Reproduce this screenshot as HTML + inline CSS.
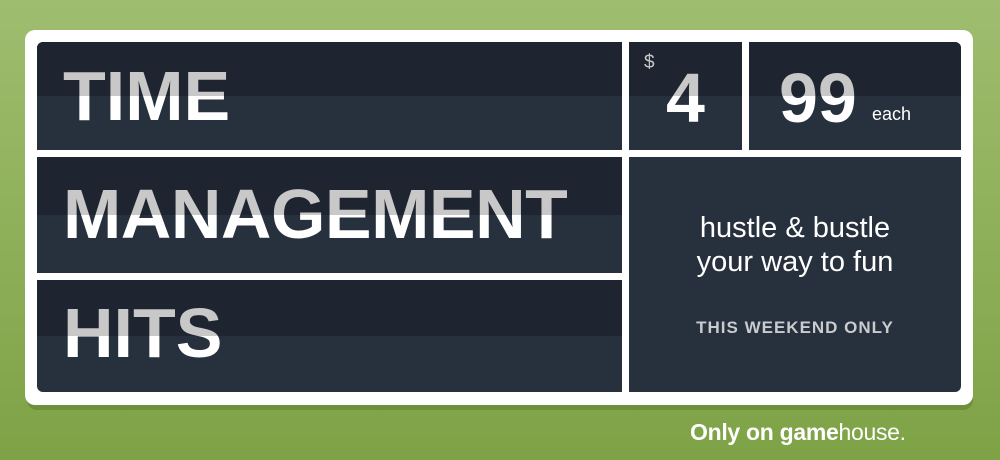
<!DOCTYPE html>
<html><head><style>
*{margin:0;padding:0;box-sizing:border-box}
body{width:1000px;height:460px;overflow:hidden;position:relative;font-family:"Liberation Sans",Arial,sans-serif;
background:linear-gradient(#9fbd6f 0%,#8fb05a 50%,#7ea246 100%)}
.shadow{position:absolute;left:27px;top:36px;width:946px;height:374px;border-radius:10px;background:#6f8f3a}
.card{position:absolute;left:25px;top:30px;width:948px;height:375px;border-radius:10px;background:#fff}
.p{position:absolute;overflow:hidden;background:#27303d}
.p.h::before{content:"";position:absolute;left:0;top:0;right:0;height:50%;background:#1f2530}
.big{position:absolute;left:0;top:0;font-weight:bold;font-size:70px;line-height:70px;white-space:nowrap;
-webkit-background-clip:text;background-clip:text;color:transparent}
.r{position:absolute;width:100%;text-align:center;color:#fff;font-size:29px;line-height:29px}
</style></head><body>
<div class="shadow"></div>
<div class="card"></div>
<div class="p h" style="left:37px;top:42px;width:585px;height:108px;border-top-left-radius:6px">
  <div class="big" style="left:26px;padding-top:19px;height:108px;background-image:linear-gradient(#c8c8c8 54px,#fff 54px)">TIME</div></div>
<div class="p h" style="left:37px;top:157px;width:585px;height:116px">
  <div class="big" style="left:26px;padding-top:22px;height:116px;letter-spacing:-0.5px;background-image:linear-gradient(#c8c8c8 58px,#fff 58px)">MANAGEMENT</div></div>
<div class="p h" style="left:37px;top:280px;width:585px;height:112px;border-bottom-left-radius:6px">
  <div class="big" style="left:26px;padding-top:18px;height:112px;background-image:linear-gradient(#c8c8c8 56px,#fff 56px)">HITS</div></div>
<div class="p h" style="left:629px;top:42px;width:113px;height:108px">
  <div style="position:absolute;left:15px;top:10px;color:#c8c8c8;font-size:19px">$</div>
  <div class="big" style="left:37px;padding-top:21px;height:108px;background-image:linear-gradient(#c8c8c8 54px,#fff 54px)">4</div></div>
<div class="p h" style="left:749px;top:42px;width:212px;height:108px;border-top-right-radius:6px">
  <div class="big" style="left:30px;padding-top:21px;height:108px;background-image:linear-gradient(#c8c8c8 54px,#fff 54px)">99</div>
  <div style="position:absolute;left:123px;top:62px;color:#fff;font-size:18px">each</div></div>
<div class="p" style="left:629px;top:157px;width:332px;height:235px;border-bottom-right-radius:6px">
  <div class="r" style="top:57px">hustle &amp; bustle</div>
  <div class="r" style="top:91px">your way to fun</div>
  <div class="r" style="top:162px;font-size:17px;line-height:17px;font-weight:bold;color:#c9cbcf;letter-spacing:1px">THIS WEEKEND ONLY</div>
</div>
<div style="position:absolute;left:690px;top:419px;color:#fff;font-size:23px;letter-spacing:-0.3px"><b>Only on game</b>house.</div>
</body></html>
